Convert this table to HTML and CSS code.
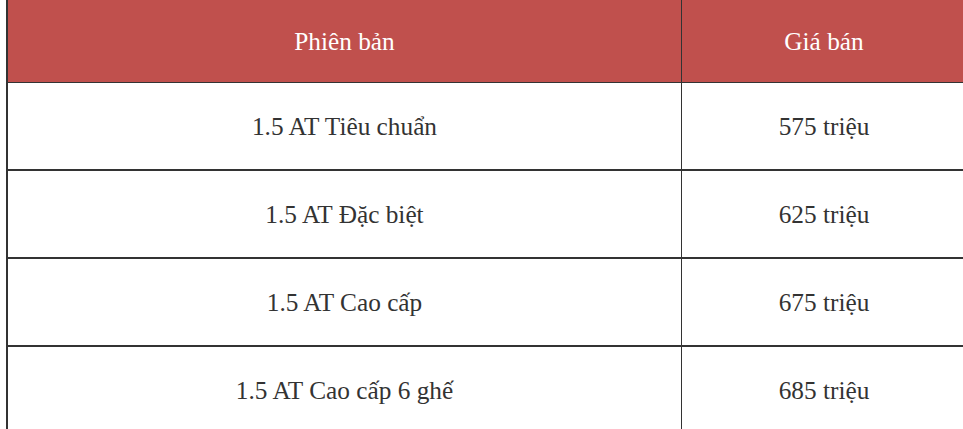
FILE: index.html
```html
<!DOCTYPE html>
<html lang="vi">
<head>
<meta charset="utf-8">
<title>Bảng giá</title>
<link rel="stylesheet" href="styles.css">
</head>
<body>
<div class="wrap">
<table class="price-table">
  <thead>
    <tr><th class="col-version">Phiên bản</th><th class="col-price">Giá bán</th></tr>
  </thead>
  <tbody>
    <tr><td>1.5 AT Tiêu chuẩn</td><td>575 triệu</td></tr>
    <tr><td>1.5 AT Đặc biệt</td><td>625 triệu</td></tr>
    <tr><td>1.5 AT Cao cấp</td><td>675 triệu</td></tr>
    <tr><td>1.5 AT Cao cấp 6 ghế</td><td>685 triệu</td></tr>
  </tbody>
</table>
</div>
</body>
</html>
```
FILE: styles.css
```css
html, body {
  margin: 0;
  padding: 0;
  background: #ffffff;
  overflow: hidden;
}
.wrap {
  padding-left: 6px;
}
.price-table {
  width: 961px;
  border-collapse: collapse;
  table-layout: fixed;
  font-family: "Liberation Serif", "Times New Roman", serif;
  font-size: 25.3px;
  color: #333333;
  border-left: 2px solid #333333;
}
.col-version { width: 673px; }
.price-table th {
  background: #c0504d;
  color: #ffffff;
  font-weight: normal;
  height: 82px;
  padding: 0;
  text-align: center;
  vertical-align: middle;
  border-bottom: 1px solid #333333;
  border-right: 1px solid #333333;
}
.price-table td {
  height: 86px;
  padding: 0;
  text-align: center;
  vertical-align: middle;
  border-bottom: 2px solid #333333;
  border-right: 1px solid #333333;
}
```
